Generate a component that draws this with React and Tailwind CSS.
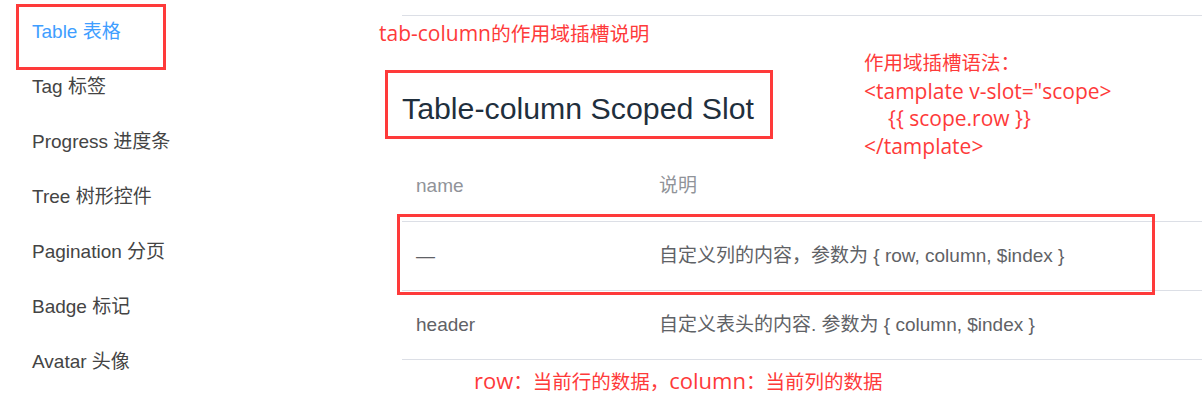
import React from "react";

const sans = { fontFamily: '"Liberation Sans", Arial, "Noto Sans CJK SC", sans-serif' };
const cjk = { fontFamily: '"Noto Sans CJK SC", sans-serif' };
const latinFont = { fontFamily: '"Open Sans", "Noto Sans CJK SC", sans-serif' };

const navItems = [
  "Table 表格",
  "Tag 标签",
  "Progress 进度条",
  "Tree 树形控件",
  "Pagination 分页",
  "Badge 标记",
  "Avatar 头像",
];

const rows = [
  ["—", "自定义列的内容，参数为 { row, column, $index }"],
  ["header", "自定义表头的内容. 参数为 { column, $index }"],
];

// Renders mixed text: CJK runs in the CJK font, Latin runs in a wider Latin face
function Mixed({ text, latinClass }) {
  const parts = text.split(/([\u3000-\u9fff\uff00-\uffef]+)/).filter(Boolean);
  return (
    <>
      {parts.map((p, i) =>
        /[\u3000-\u9fff\uff00-\uffef]/.test(p) ? (
          <span key={i} style={cjk}>{p}</span>
        ) : (
          <span key={i} className={latinClass} style={latinFont}>{p}</span>
        )
      )}
    </>
  );
}

export default function App() {
  return (
    <div
      className="relative w-[1202px] h-[407px] overflow-hidden bg-white flex"
      style={sans}
    >
      {/* Sidebar */}
      <nav className="w-[402px] shrink-0 pt-[5px] pl-[32px]">
        {navItems.map((t, i) => (
          <div
            key={t}
            className={
              i === 0
                ? "h-[55px] flex items-center text-[19px] text-[#409eff]"
                : "h-[55px] flex items-center text-[19px] text-[#444444]"
            }
          >
            {t}
          </div>
        ))}
      </nav>

      {/* Main */}
      <main className="flex-1 mt-[15px] border-t border-[#dcdfe6]">
        <h3 className="pt-[70px] text-[30.3px] leading-[45px] text-[#1f2f3d] font-normal">
          Table-column Scoped Slot
        </h3>
        <div className="mt-[21px] text-[19px]">
          <div className="h-[70px] flex items-center border-b border-[#dcdfe6] text-[#909399]">
            <div className="w-[243px] pl-[14px]">name</div>
            <div className="pl-[14px]">说明</div>
          </div>
          {rows.map(([a, b]) => (
            <div
              key={a}
              className="h-[69px] flex items-center border-b border-[#dcdfe6] text-[#5f6266]"
            >
              <div className="w-[243px] pl-[14px]">{a}</div>
              <div className="pl-[14px]">{b}</div>
            </div>
          ))}
        </div>
      </main>

      {/* Red annotation boxes drawn over the page */}
      <div className="absolute left-[16px] top-[4px] w-[150px] h-[66px] border-[3px] border-[#fe3a3a]" />
      <div className="absolute left-[385px] top-[70px] w-[388px] h-[69px] border-[3px] border-[#fe3a3a]" />
      <div className="absolute left-[397px] top-[214px] w-[758px] h-[81px] border-[3px] border-[#fe3a3a]" />

      {/* Red annotation texts */}
      <div className="absolute left-[379px] top-[19px] text-[19.8px] leading-[28px] text-[#fe3a3a] whitespace-nowrap">
        <Mixed text="tab-column的作用域插槽说明" latinClass="text-[21px]" />
      </div>

      <div className="absolute left-[864px] top-[48px] text-[19.5px] leading-[27.5px] text-[#fe3a3a] whitespace-pre">
        <div><Mixed text="作用域插槽语法：" latinClass="text-[21px]" /></div>
        <div className="text-[21px]" style={latinFont}>{'<tamplate v-slot="scope>'}</div>
        <div className="pl-[24px] text-[21px]" style={latinFont}>{"{{ scope.row }}"}</div>
        <div className="text-[21px]" style={latinFont}>{"</tamplate>"}</div>
      </div>

      <div className="absolute left-[474px] top-[366px] text-[19.5px] leading-[28px] text-[#fe3a3a] whitespace-nowrap">
        <Mixed text="row：当前行的数据，column：当前列的数据" latinClass="text-[22px]" />
      </div>
    </div>
  );
}
